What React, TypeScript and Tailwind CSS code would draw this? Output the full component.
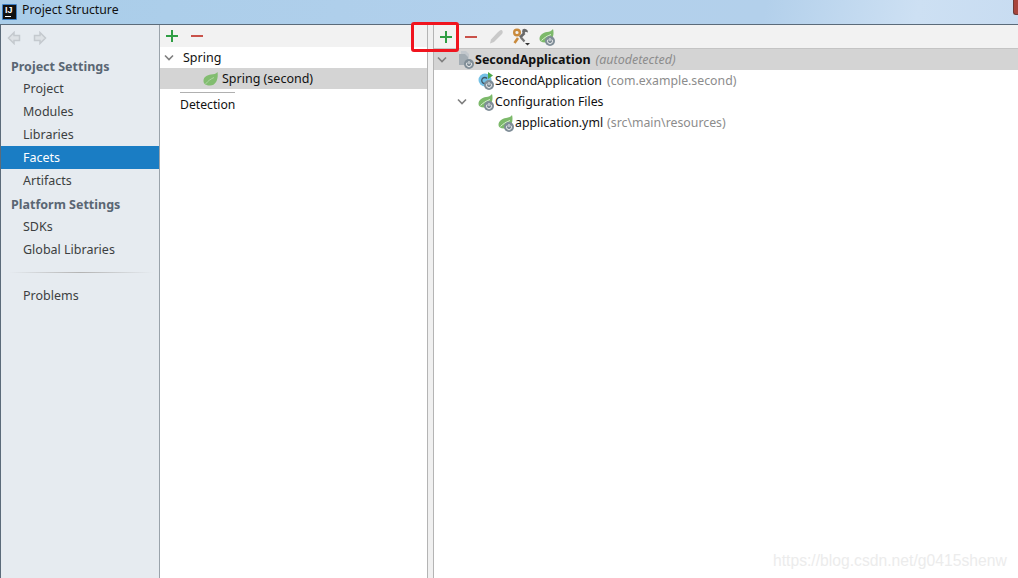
import React from 'react';

const font = "[font-family:'Noto_Sans','Open_Sans',sans-serif]";

const Plus = () => (
  <svg width="16" height="16" viewBox="0 0 16 16">
    <path d="M8 2v12M2 8h12" stroke="#2f9e44" strokeWidth="2" fill="none" />
  </svg>
);

const Minus = () => (
  <svg width="16" height="16" viewBox="0 0 16 16">
    <path d="M2 8h12" stroke="#c9524a" strokeWidth="2" fill="none" />
  </svg>
);

const Chevron = () => (
  <svg width="10" height="8" viewBox="0 0 10 8">
    <path d="M1 1.500l4 4 4-4" stroke="#7f7f7f" strokeWidth="1.600" fill="none" />
  </svg>
);

const Leaf = () => (
  <svg width="15" height="14" viewBox="0 0 15 14">
    <path d="M14.500 0C15.500 6 13.500 13.500 7 13.500 3 13.500 .5 12 .5 9 .5 5 4 3 8 2.500 10.500 2.200 13 2 14.500 0z" fill="#82bd70" />
    <path d="M2.500 12c2.500-3 5-5 8.500-6.500" stroke="#b3d9a8" strokeWidth=".9" fill="none" />
  </svg>
);

const Badge = () => (
  <svg width="10" height="10" viewBox="0 0 10 10" className="absolute right-[1px] bottom-[-1px]">
    <circle cx="5" cy="5" r="5" fill="#7f8d97" />
    <path d="M3.200 3.500a2.500 2.500 0 1 0 3.600 0M5 2v3" stroke="#f2f2f2" strokeWidth="1" fill="none" />
  </svg>
);

const SpringBoot = () => (
  <span className="relative inline-block w-[17px] h-4">
    <svg width="15" height="14" viewBox="0 0 15 14" className="absolute left-0 top-0">
      <path d="M14 0C15.500 5 14 13 7 13.500 3 13.800 .5 12.500 .5 10 .5 6 4 3.500 8 3 10.500 2.700 12.500 2 14 0z" fill="#7cb96a" />
      <path d="M2.500 11.500C5 9 8 7 12 5.500" stroke="#dcefd6" strokeWidth="1" fill="none" />
    </svg>
    <Badge />
  </span>
);

const NavItem = ({ label, active }: { label: string; active?: boolean }) => (
  <div className={`h-[23px] pl-[22px] pt-[2px] flex items-center text-[12.500px] ${active ? 'bg-[#1a7dc4] text-white' : 'text-[#3c3f41]'}`}>
    {label}
  </div>
);

const NavHeader = ({ label, className }: { label: string; className: string }) => (
  <div className={`pl-[10px] flex items-center text-[12.500px] font-bold text-[#5a6673] ${className}`}>{label}</div>
);

export default function App() {
  return (
    <div className={`relative w-[1018px] h-[578px] overflow-hidden flex flex-col bg-white ${font}`}>
      <div className="h-[24px] shrink-0 flex items-center pl-[2px] pb-[1px] bg-[linear-gradient(100deg,#a9cde9_0%,#b2d0ec_50%,#b3d0eb_75%,#cde0f3_90%,#c8dcf1_100%)]">
        <div className="w-[15px] h-[16px] bg-[#111] border border-[#3d7fc4] rounded-[1px] flex flex-col pl-[2px] pt-[1px]">
          <span className="text-white text-[9px] font-bold leading-[9px] [font-family:'Liberation_Sans',sans-serif]">IJ</span>
          <span className="w-[6px] h-[1px] mt-[1px] bg-white" />
        </div>
        <span className="ml-[5px] -mt-[3px] text-[12.250px] text-[#111]">Project Structure</span>
      </div>
      <div className="h-[1px] shrink-0 bg-[#5b6b7a]" />
      <div className="flex-1 flex min-h-0">
        <div className="w-[160px] shrink-0 bg-[#e6ebf0] border-l border-l-[#5b6b7a] border-r border-r-[#9aa3ab] flex flex-col">
          <div className="h-[30px] shrink-0 flex items-center pl-[6px] pb-[5px] gap-[12px]">
            <svg width="14" height="14" viewBox="0 0 14 14"><path d="M7 1.500L1.500 7 7 12.500V9.500h5.500v-5H7z" fill="#dde1e5" stroke="#c4c9ce" strokeWidth="1.500" /></svg>
            <svg width="14" height="14" viewBox="0 0 14 14"><path d="M7 1.500L12.500 7 7 12.500V9.500H1.500v-5H7z" fill="#dde1e5" stroke="#c4c9ce" strokeWidth="1.500" /></svg>
          </div>
          <NavHeader label="Project Settings" className="h-[22px] pt-[2px]" />
          <NavItem label="Project" />
          <NavItem label="Modules" />
          <NavItem label="Libraries" />
          <NavItem label="Facets" active />
          <NavItem label="Artifacts" />
          <NavHeader label="Platform Settings" className="h-[23px] pt-[3px]" />
          <NavItem label="SDKs" />
          <NavItem label="Global Libraries" />
          <div className="h-[23px] flex items-center pl-[8px] pr-[6px]">
            <div className="h-[1px] w-full bg-[linear-gradient(90deg,#e6ebf0,#b3b3b3_50%,#e6ebf0)]" />
          </div>
          <NavItem label="Problems" />
        </div>

        <div className="w-[267px] shrink-0 flex flex-col">
          <div className="h-[22px] bg-[#f2f2f2] flex items-center pl-[4px] gap-[9px]">
            <Plus />
            <Minus />
          </div>
          <div className="h-[21px] flex items-center text-[12.500px] text-[#111]">
            <span className="ml-[4px] w-[19px]"><Chevron /></span>
            <span className="mt-[2px]">Spring</span>
          </div>
          <div className="h-[21px] bg-[#d4d4d4] flex items-center text-[12.500px] text-[#111] pl-[43px] gap-[4px]">
            <Leaf />
            <span className="mt-[2px]">Spring (second)</span>
          </div>
          <div className="h-[1px] w-[55px] ml-[20px] mt-[3px] bg-[#b0b0b0]" />
          <div className="h-[21px] mt-[1px] pl-[20px] pt-[2px] flex items-center text-[12.200px] text-[#111]">Detection</div>
        </div>

        <div className="w-[7px] shrink-0 bg-[#f0f0f0] border-l border-l-[#b4b4b4] border-r border-r-[#b4b4b4]" />

        <div className="flex-1 flex flex-col">
          <div className="h-[23px] bg-[#f2f2f2] flex items-center pl-[4px] gap-[9px]">
            <Plus />
            <Minus />
            <svg width="16" height="16" viewBox="0 0 16 16"><path d="M13.500 1c1.500 1 1.500 2.500.5 4L6 13l-4 1.500L3 10.500 10 3c1-1 2.500-2.500 3.500-2z" fill="#c9c9c9" /></svg>
            <span className="w-[18px] h-[18px] -ml-[1px]">
              <svg width="18" height="18" viewBox="0 0 18 18">
                <circle cx="5" cy="4.500" r="2.800" fill="none" stroke="#c98a3c" strokeWidth="2.400" />
                <path d="M8 9.500L12.500 5" stroke="#686868" strokeWidth="2.600" />
                <path d="M10.500 1.500a3.500 3.500 0 0 1 5.500 3l-2.500-.7-1 1.500-2.500-.8z" fill="#686868" />
                <path d="M6 10l-3.500 5" stroke="#c98a3c" strokeWidth="2.600" />
                <path d="M9 9.500l3.500 4" stroke="#757575" strokeWidth="2.200" />
                <path d="M13 15h5l-2.500 2.500z" fill="#333" />
              </svg>
            </span>
            <SpringBoot />
          </div>
          <div className="h-[1px] bg-[#c4c4c4]" />
          <div className="h-[21px] bg-[#d4d4d4] flex items-center text-[12.500px]">
            <span className="ml-[3px] w-[21px]"><Chevron /></span>
            <span className="relative w-[17px] h-4">
              <svg width="13" height="15" viewBox="0 0 13 15" className="absolute left-0 top-[-1px]">
                <path d="M3 0h5l3 3v8H3z" fill="#c2c7cc" />
                <path d="M1 3h6l3 3v8H1z" fill="#a4adb4" />
              </svg>
              <Badge />
            </span>
            <span className="mt-[2px] font-bold text-[#111]">SecondApplication</span>
            <span className="mt-[2px] ml-[5px] italic text-[#8c8c8c]">(autodetected)</span>
          </div>
          <div className="h-[21px] flex items-center text-[12.300px] pl-[44px]">
            <span className="relative w-[17px] h-4">
              <svg width="15" height="15" viewBox="0 0 15 15" className="absolute left-0 top-[-1px]">
                <circle cx="7" cy="8" r="6.500" fill="#74c1e6" />
                <path d="M10 0l5 3.500L10 7z" fill="#4fa84a" />
                <path d="M9 6.500a3 3 0 1 0 0 4" stroke="#3f5666" strokeWidth="1.300" fill="none" />
              </svg>
              <Badge />
            </span>
            <span className="mt-[2px] text-[#111]">SecondApplication</span>
            <span className="mt-[2px] ml-[5px] text-[#8c8c8c]">(com.example.second)</span>
          </div>
          <div className="h-[21px] flex items-center text-[12.300px]">
            <span className="ml-[23px] w-[21px]"><Chevron /></span>
            <SpringBoot />
            <span className="mt-[2px] text-[#111]">Configuration Files</span>
          </div>
          <div className="h-[21px] flex items-center text-[12.300px] pl-[64px]">
            <SpringBoot />
            <span className="mt-[2px] text-[#111]">application.yml</span>
            <span className="mt-[2px] ml-[4px] text-[#8c8c8c]">(src\main\resources)</span>
          </div>
        </div>
      </div>

      {/* annotation + window bits that sit over the screenshot */}
      <div className="absolute left-[411px] top-[22px] w-[48px] h-[30px] border-[3px] border-[#f0141e] rounded-[3px]" />
      <div className="absolute left-[1013px] top-0 w-[5px] h-[15px] bg-[#a8453c] rounded-bl-[3px] border-l border-b border-[#6d3a36]" />
      <div className="absolute left-[773px] top-[549px] text-[15.700px] text-[#ececec] [font-family:'Liberation_Sans',sans-serif]">https://blog.csdn.net/g0415shenw</div>
    </div>
  );
}
